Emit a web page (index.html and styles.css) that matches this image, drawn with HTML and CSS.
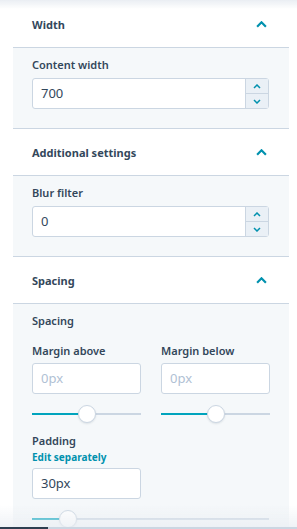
FILE: index.html
```html
<!DOCTYPE html>
<html lang="en">
<head>
    <meta charset="UTF-8">
    <meta name="viewport" content="width=device-width, initial-scale=1.0">
    <title>Section settings</title>
    <link rel="stylesheet" href="styles.css">
</head>
<body>

<div class="top-shade"></div>

<div class="panel">
    <section class="group">
        <div class="group-head">
            <span>Width</span>
            <svg class="caret" viewBox="0 0 10 6"><path d="M1 5 L5 1 L9 5"/></svg>
        </div>
        <div class="group-body">
            <div class="field-label">Content width</div>
            <div class="number-input">
                <span class="value">700</span>
                <div class="spinner">
                    <span class="spin"><svg viewBox="0 0 8 5"><path d="M1 4 L4 1 L7 4"/></svg></span>
                    <span class="spin"><svg viewBox="0 0 8 5"><path d="M1 1 L4 4 L7 1"/></svg></span>
                </div>
            </div>
        </div>
    </section>

    <section class="group">
        <div class="group-head">
            <span>Additional settings</span>
            <svg class="caret" viewBox="0 0 10 6"><path d="M1 5 L5 1 L9 5"/></svg>
        </div>
        <div class="group-body">
            <div class="field-label">Blur filter</div>
            <div class="number-input">
                <span class="value">0</span>
                <div class="spinner">
                    <span class="spin"><svg viewBox="0 0 8 5"><path d="M1 4 L4 1 L7 4"/></svg></span>
                    <span class="spin"><svg viewBox="0 0 8 5"><path d="M1 1 L4 4 L7 1"/></svg></span>
                </div>
            </div>
        </div>
    </section>

    <section class="group">
        <div class="group-head">
            <span>Spacing</span>
            <svg class="caret" viewBox="0 0 10 6"><path d="M1 5 L5 1 L9 5"/></svg>
        </div>
        <div class="group-body">
            <div class="field-label">Spacing</div>
            <div class="margin-grid">
                <div class="col">
                    <div class="field-label">Margin above</div>
                    <div class="text-input placeholder">0px</div>
                    <div class="slider">
                        <div class="track"><div class="fill" style="width: 50%"></div></div>
                        <div class="thumb" style="left: 50%"></div>
                    </div>
                </div>
                <div class="col">
                    <div class="field-label">Margin below</div>
                    <div class="text-input placeholder">0px</div>
                    <div class="slider">
                        <div class="track"><div class="fill" style="width: 50%"></div></div>
                        <div class="thumb" style="left: 50%"></div>
                    </div>
                </div>
            </div>
            <div class="field-label padding-label">Padding</div>
            <a class="edit-link" href="#">Edit separately</a>
            <div class="text-input half">30px</div>
            <div class="slider">
                <div class="track"><div class="fill" style="width: 15%"></div></div>
                <div class="thumb" style="left: 15%"></div>
            </div>
        </div>
    </section>
</div>

<div class="bottom-shade"></div>
<div class="scroll-bar"><div class="scroll-thumb"></div></div>

</body>
</html>
```

FILE: styles.css
```css
body {
    margin: 0;
    font-family: "Noto Sans", sans-serif;
    color: #33475b;
    background-color: white;
}
.top-shade {
    position: fixed;
    top: 0;
    left: 0;
    right: 0;
    height: 9px;
    background: linear-gradient(#eaeef3, rgba(255, 255, 255, 0));
}
.panel {
    margin: 1px 8px 0 13px;
}
.group-head {
    height: 46px;
    display: flex;
    align-items: center;
    justify-content: space-between;
    padding: 0 22px 0 19px;
    background-color: white;
    border-bottom: 1px solid #cbd6e2;
    font-size: 11px;
    font-weight: 700;
}
.caret {
    width: 11px;
    height: 7px;
    fill: none;
    stroke: #0091ae;
    stroke-width: 2;
}
.group-body {
    padding: 9px 20px 19px 19px;
    background-color: #f5f8fa;
    border-bottom: 1px solid #cbd6e2;
}
.field-label {
    font-size: 11px;
    font-weight: 600;
    line-height: 16px;
    margin-bottom: 5px;
}
.number-input {
    display: flex;
    height: 31px;
    box-sizing: border-box;
    background-color: white;
    border: 1px solid #cbd6e2;
    border-radius: 3px;
}
.value {
    flex: 1;
    padding-left: 8px;
    font-size: 13px;
    line-height: 29px;
}
.spinner {
    width: 22px;
    display: flex;
    flex-direction: column;
    background-color: #eaf0f6;
    border-left: 1px solid #cbd6e2;
}
.spin {
    flex: 1;
    display: flex;
    align-items: center;
    justify-content: center;
}
.spin + .spin {
    border-top: 1px solid #cbd6e2;
}
.spin svg {
    width: 8px;
    height: 5px;
    fill: none;
    stroke: #0091ae;
    stroke-width: 1.5;
}
.group:last-child .group-body > .field-label:first-child {
    margin-bottom: 14px;
}
.margin-grid {
    display: grid;
    grid-template-columns: 109px 109px;
    column-gap: 20px;
}
.margin-grid .field-label {
    margin-bottom: 4px;
}
.text-input {
    height: 31px;
    box-sizing: border-box;
    padding-left: 8px;
    background-color: white;
    border: 1px solid #cbd6e2;
    border-radius: 3px;
    font-size: 13px;
    line-height: 29px;
}
.text-input.half {
    width: 109px;
}
.placeholder {
    color: #b0c1d4;
}
.slider {
    position: relative;
    height: 24px;
    margin-top: 8px;
}
.track {
    position: absolute;
    top: 11px;
    left: 0;
    right: 0;
    height: 2px;
    background-color: #cbd6e2;
}
.fill {
    height: 100%;
    background-color: #00a4bd;
}
.thumb {
    position: absolute;
    top: 3px;
    width: 16px;
    height: 16px;
    margin-left: -9px;
    background-color: white;
    border: 1px solid #cbd6e2;
    border-radius: 50%;
    box-shadow: 0 1px 2px rgba(45, 62, 80, 0.12);
}
.padding-label {
    margin-top: 7px;
    margin-bottom: 2px;
}
.edit-link {
    display: block;
    color: #0091ae;
    font-size: 10px;
    font-weight: 700;
    line-height: 13px;
    text-decoration: none;
    margin-bottom: 4px;
}
.bottom-shade {
    position: fixed;
    left: 0;
    right: 0;
    bottom: 0;
    height: 24px;
    background: linear-gradient(rgba(234, 238, 243, 0), rgba(234, 238, 243, 0.8));
}
.scroll-bar {
    position: fixed;
    left: 0;
    right: 0;
    bottom: 0;
    height: 2px;
    background-color: #cbd6e2;
}
.scroll-thumb {
    width: 48px;
    height: 100%;
    background-color: #2d3e50;
}
```
